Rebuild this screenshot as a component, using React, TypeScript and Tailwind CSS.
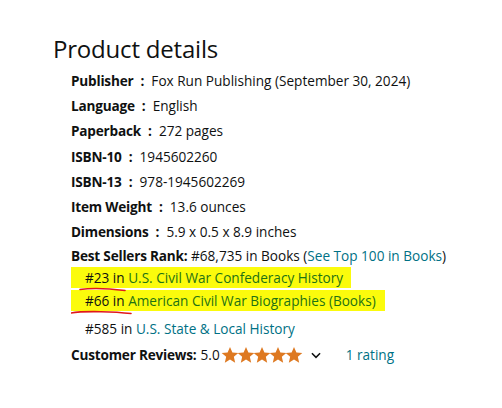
import React from 'react';

const rows: [string, string][] = [
  ['Publisher', 'Fox Run Publishing (September 30, 2024)'],
  ['Language', 'English'],
  ['Paperback', '272 pages'],
  ['ISBN-10', '1945602260'],
  ['ISBN-13', '978-1945602269'],
  ['Item Weight', '13.6 ounces'],
  ['Dimensions', '5.9 x 0.5 x 8.9 inches'],
];

const Star = () => (
  <svg width="18" height="18" viewBox="0 0 24 24" className="-mx-[1px]">
    <path d="M12 1.2l3.2 7.3 7.9.7-6 5.2 1.8 7.8L12 18.1l-6.9 4.1 1.8-7.8-6-5.2 7.9-.7z" fill="#de7921" />
  </svg>
);

export default function App() {
  return (
    <div className="min-h-[408px] w-[502px] bg-white pl-[53px] pt-[33px] text-[#0f1111] font-['Open_Sans',sans-serif]">
      <h2 className="text-[24px] leading-[32px] tracking-[-0.2px]">Product details</h2>
      <ul className="ml-[18px] mt-[3px] text-[13.6px]">
        {rows.map(([k, v]) => (
          <li key={k} className="h-[25.2px] leading-[25px]">
            <span className="font-bold tracking-[-0.2px]">{k}</span>
            <span className="font-bold mx-[7px]">:</span>
            <span>{v}</span>
          </li>
        ))}
        <li className="leading-[24px]">
          <span className="font-bold tracking-[-0.2px]">Best Sellers Rank:</span> #68,735 in Books (
          <span className="text-[#007185]">See Top 100 in Books</span>)
          <ul className="relative mt-[-2px]">
            <li className="h-[23px] leading-[21px] pt-[1px]">
              <span className="bg-[#fbfb0c] py-[1px] pl-[14px] pr-[8px]">
                #23 in <span className="text-[#1e7214]">U.S. Civil War Confederacy History</span>
              </span>
            </li>
            <li className="h-[24px] leading-[22px] pt-[1px]">
              <span className="bg-[#fbfb0c] py-[1px] pl-[14px] pr-[9px]">
                #66 in <span className="text-[#1e7214]">American Civil War Biographies (Books)</span>
              </span>
            </li>
            <li className="h-[28px] leading-[32px] pl-[14px]">
              #585 in <span className="text-[#007185]">U.S. State &amp; Local History</span>
            </li>
            <svg className="absolute left-0 top-0 pointer-events-none" width="80" height="60" viewBox="0 0 80 60">
              <path d="M9 23.5c10-1.5 25-1.5 45 1" stroke="#e0191b" strokeWidth="1.6" fill="none" strokeLinecap="round" />
              <path d="M0 47c8-1.5 18-1.5 30-1.3c10 .2 20 .7 30 1.8" stroke="#e0191b" strokeWidth="1.6" fill="none" strokeLinecap="round" />
            </svg>
          </ul>
        </li>
        <li className="flex items-center h-[25px] mt-[1px]">
          <span className="font-bold tracking-[-0.2px]">Customer Reviews:</span>
          <span className="ml-[4px]">5.0</span>
          <span className="flex ml-[2px]">
            <Star /><Star /><Star /><Star /><Star />
          </span>
          <svg width="14" height="14" viewBox="0 0 24 24" className="ml-[7px]">
            <path d="M5 9l7 7 7-7" stroke="#0f1111" strokeWidth="2.6" fill="none" />
          </svg>
          <span className="ml-[23px] text-[#007185]">1 rating</span>
        </li>
      </ul>
    </div>
  );
}
